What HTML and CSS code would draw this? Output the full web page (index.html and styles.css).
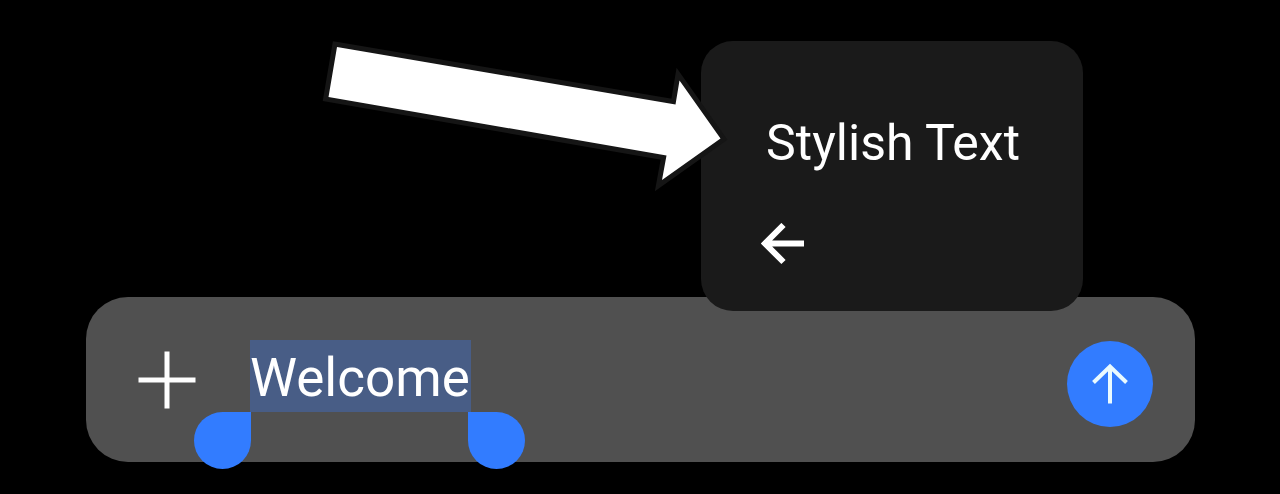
FILE: index.html
```html
<!DOCTYPE html>
<html lang="en">
<head>
  <meta charset="utf-8">
  <meta name="viewport" content="width=device-width, initial-scale=1">
  <title>Stylish Text</title>
  <link rel="stylesheet" href="styles.css">
</head>
<body>
  <main class="screen">
    <form class="composer">
      <button class="add" type="button" aria-label="Add attachment">
        <svg class="add-icon" viewBox="0 0 58 58" aria-hidden="true">
          <path d="M29 0.500V57.500M0.500 29H57.500"/>
        </svg>
      </button>
      <div class="field">
        <div class="selection">
          <input class="message" type="text" value="Welcome" aria-label="Message">
          <span class="handle handle-start"></span>
          <span class="handle handle-end"></span>
        </div>
      </div>
      <button class="send" type="button" aria-label="Send">
        <svg class="send-icon" viewBox="0 0 40 44" aria-hidden="true">
          <path d="M20 41.500V4.500M3.500 20.500L20 4.500L36.500 20.500"/>
        </svg>
      </button>

      <div class="menu">
        <button class="menu-item" type="button">Stylish Text</button>
        <button class="back" type="button" aria-label="Back">
          <svg class="back-icon" viewBox="0 0 44 42" aria-hidden="true">
            <path d="M43 20.500H4M22.500 2L4 20.500L22.500 39"/>
          </svg>
        </button>
      </div>

      <svg class="pointer" viewBox="0 0 410 160" aria-hidden="true">
        <path d="M17 17L355.500 74.500L359.500 50.500L400.500 108.500L342 150L346.500 125.500L8.500 67Z"/>
      </svg>
    </form>
  </main>
</body>
</html>
```
FILE: styles.css
```css
* {
  box-sizing: border-box;
}

body {
  margin: 0;
  background: #000;
  color: #fff;
  font-family: Roboto, "Liberation Sans", sans-serif;
}

button,
input {
  margin: 0;
  padding: 0;
  border: 0;
  background: none;
  color: inherit;
  font: inherit;
}

button {
  cursor: pointer;
}

svg {
  display: block;
  fill: none;
  stroke: #fff;
}

.screen {
  display: flex;
  flex-direction: column;
  justify-content: flex-end;
  min-height: 100vh;
  padding: 0 85px 32px 86px;
}

.composer {
  position: relative;
  display: flex;
  align-items: center;
  padding: 36px 42px 35px 52px;
  border-radius: 42px;
  background: #505050;
}

.add-icon {
  width: 58px;
  height: 58px;
  stroke-width: 5;
}

.field {
  flex: 1;
  padding: 0 0 9px 54px;
}

.selection {
  position: relative;
  width: fit-content;
}

.message {
  display: block;
  width: 221px;
  height: 72px;
  padding-top: 4px;
  background: #485d86;
  font-size: 53px;
  line-height: 68px;
  outline: none;
}

.handle {
  position: absolute;
  top: 100%;
  width: 57px;
  height: 57px;
  background: #327cff;
}

.handle-start {
  right: 100%;
  margin-right: -1px;
  border-radius: 50% 0 50% 50%;
}

.handle-end {
  left: 100%;
  margin-left: -3px;
  border-radius: 0 50% 50% 50%;
}

.send {
  display: grid;
  place-items: center;
  width: 86px;
  height: 86px;
  margin-top: 8px;
  border-radius: 50%;
  background: #327cff;
}

.send-icon {
  width: 40px;
  height: 44px;
  stroke: #eafaff;
  stroke-width: 4;
}

/* Floating selection menu above the message bar */
.menu {
  position: absolute;
  right: 112px;
  bottom: 151px;
  display: flex;
  flex-direction: column;
  align-items: flex-start;
  gap: 48px;
  padding: 70px 58px 46px 60px;
  border-radius: 32px;
  background: #1a1a1a;
}

.menu-item {
  padding: 0 5px;
  font-size: 50px;
  line-height: 64px;
  white-space: nowrap;
}

.back-icon {
  width: 44px;
  height: 42px;
  stroke-width: 6;
}

/* Callout arrow aimed at the menu item */
.pointer {
  position: absolute;
  right: 465px;
  bottom: 272px;
  width: 410px;
  height: 160px;
  overflow: visible;
  fill: #fff;
  stroke: #151515;
  stroke-width: 10;
  paint-order: stroke;
}
```
